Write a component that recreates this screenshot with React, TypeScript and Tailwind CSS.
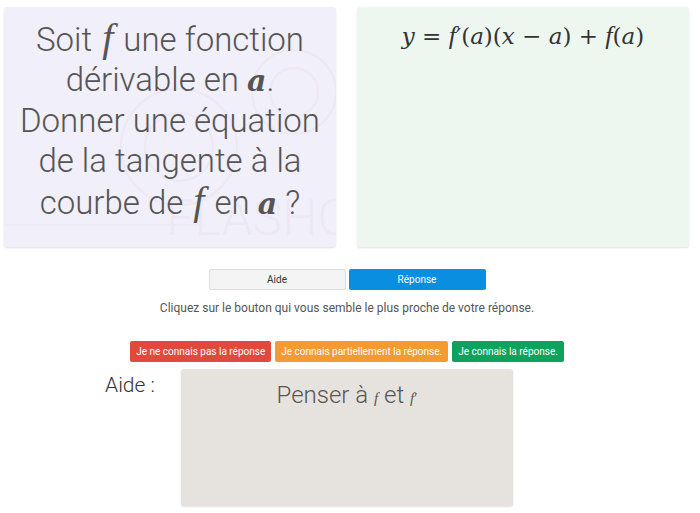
import React from "react";

const serif = { fontFamily: '"DejaVu Serif", "Liberation Serif", serif' };
const times = { fontFamily: '"Liberation Serif", "DejaVu Serif", serif' };

const M = ({ children, className = "" }: { children: React.ReactNode; className?: string }) => (
  <span className={`italic ${className}`} style={serif}>
    {children}
  </span>
);

// KaTeX's f hangs below the baseline, Liberation Serif's italic f does too
const F = ({ className = "" }: { className?: string }) => (
  <span className={`italic ${className}`} style={times}>
    f
  </span>
);

const Watermark = () => (
  <svg
    className="absolute inset-0 h-full w-full"
    viewBox="0 0 332 240"
    fill="none"
    stroke="#ece8f4"
    strokeWidth="2"
  >
    <circle cx="175" cy="140" r="58" />
    <circle cx="175" cy="140" r="34" />
    <circle cx="290" cy="85" r="42" />
    <circle cx="290" cy="85" r="24" />
    <path d="M0 218 L200 218" stroke="#efebf6" />
  </svg>
);

const AnswerButton = ({ label, color }: { label: string; color: string }) => (
  <button className={`h-[21px] rounded-[2px] px-[6px] text-[10px] leading-none text-white ${color}`}>
    {label}
  </button>
);

export default function App() {
  return (
    <div
      className="h-[513px] w-[700px] overflow-hidden bg-white"
      style={{ fontFamily: 'Roboto, "Liberation Sans", sans-serif' }}
    >
      <div className="flex gap-[21px] px-[4px] pt-[7px]">
        <div className="relative h-[240px] w-[332px] overflow-hidden rounded-[3px] bg-[#f1eff9] shadow-[0_1px_2px_rgba(0,0,0,0.12)]">
          <Watermark />
          <span className="absolute right-[-14px] bottom-[4px] text-[50px] font-light leading-none text-[#ece8f4]">
            FLASHC
          </span>
          <p className="relative pt-[11px] text-center text-[33px] font-light leading-[40px] text-[#555]">
            Soit <F className="px-[2px] text-[40px]" /> une fonction
            <br />
            dérivable en <M className="font-bold text-[30px]">a</M>.
            <br />
            Donner une équation
            <br />
            de la tangente à la
            <br />
            courbe de <F className="px-[2px] text-[40px]" /> en <M className="font-bold text-[30px]">a</M> ?
          </p>
        </div>
        <div className="h-[240px] w-[332px] rounded-[3px] bg-[#edf7ef] shadow-[0_1px_2px_rgba(0,0,0,0.12)]">
          <p className="pt-[14px] text-center text-[23px] leading-[30px] text-[#333]" style={serif}>
            <M>y</M> = <F className="text-[26px]" />′(<M>a</M>)(<M>x</M> − <M>a</M>) + <F className="text-[26px]" />(<M>a</M>)
          </p>
        </div>
      </div>

      <div className="pr-[6px]">
        <div className="mt-[22px] flex justify-center gap-[3px]">
          <button className="h-[21px] w-[137px] rounded-[2px] border border-[#ddd] bg-[#f4f4f4] text-[10px] text-[#333]">
            Aide
          </button>
          <button className="h-[21px] w-[137px] rounded-[2px] bg-[#0a8fe0] text-[10px] text-white">
            Réponse
          </button>
        </div>

        <p className="mt-[10px] text-center text-[12px] leading-[16px] text-[#555]">
          Cliquez sur le bouton qui vous semble le plus proche de votre réponse.
        </p>

        <div className="mt-[25px] flex justify-center gap-[4px]">
          <AnswerButton label="Je ne connais pas la réponse" color="bg-[#e0493b]" />
          <AnswerButton label="Je connais partiellement la réponse." color="bg-[#f39a31]" />
          <AnswerButton label="Je connais la réponse." color="bg-[#0da25e]" />
        </div>

        <div className="mt-[7px] flex justify-center">
          <div className="w-[76px] pt-[4px] text-[21px] font-light leading-[24px] text-[#333]">Aide :</div>
          <div className="h-[137px] w-[332px] rounded-[3px] bg-[#e6e3df] shadow-[0_1px_2px_rgba(0,0,0,0.12)]">
            <p className="pt-[10px] text-center text-[24px] font-light leading-[32px] text-[#555]">
              Penser à <F className="text-[15px]" /> et <F className="text-[15px]" />
              <span className="text-[15px]" style={times}>′</span>
            </p>
          </div>
          <div className="w-[76px]" />
        </div>
      </div>
    </div>
  );
}
